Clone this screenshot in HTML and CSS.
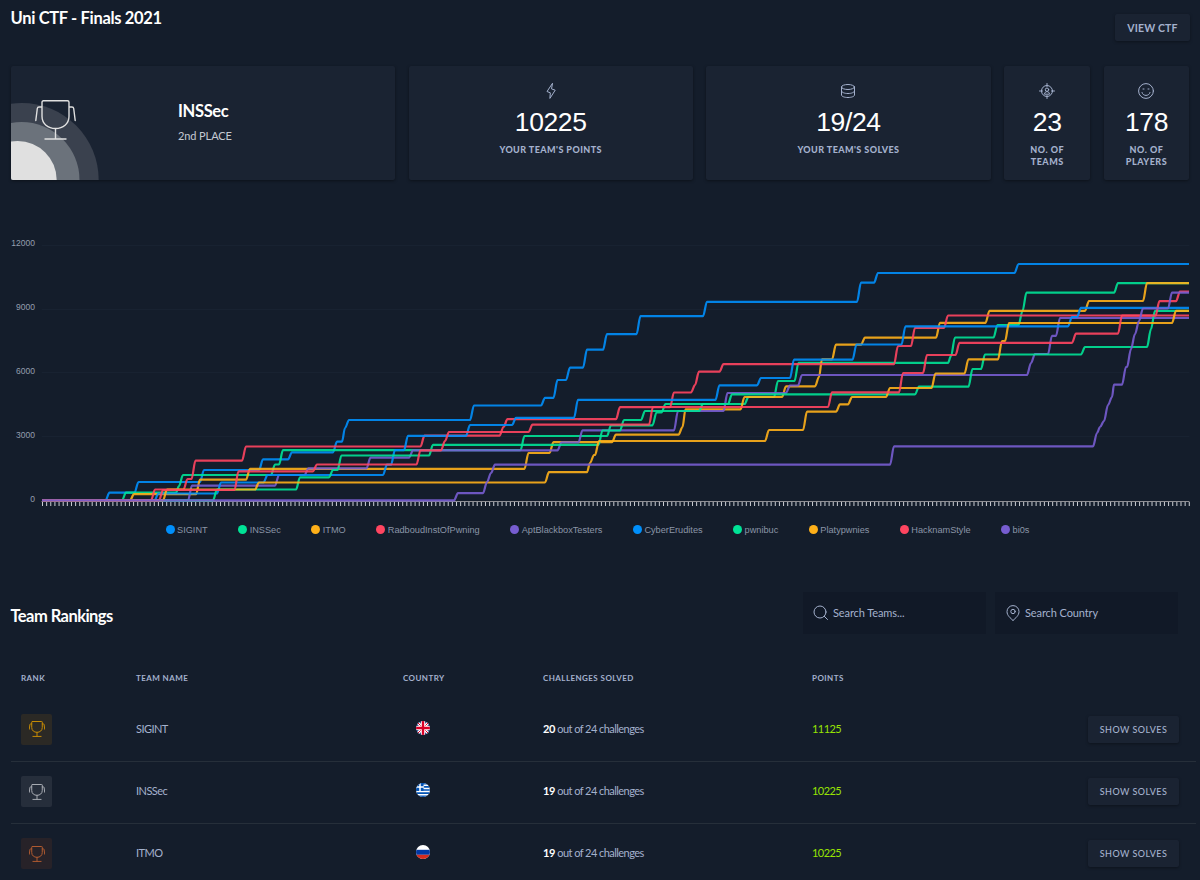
FILE: index.html
```html
<!DOCTYPE html>
<html lang="en">
<head>
    <meta charset="UTF-8">
    <meta name="viewport" content="width=device-width, initial-scale=1.0">
    <title>Uni CTF - Finals 2021</title>
    <link rel="stylesheet" href="styles.css">
</head>
<body>
    <!-- Shared icons -->
    <svg class="sprite" width="0" height="0">
        <symbol id="trophy" viewBox="0 0 41 40">
            <path d="M8.5 .8h24q1.5 0 1.5 1.5v14c0 7.5-6 12.2-13.5 12.2S7 23.800 7 16.300v-14Q7 .8 8.500 .8zM20.500 28.500V39M10 39h21M7 7H4Q2.500 7 2.300 8.500L.8 20.500M34 7h3q1.500 0 1.700 1.500l1.500 12"/>
        </symbol>
    </svg>

    <header class="page-header">
        <h1>Uni CTF - Finals 2021</h1>
        <button class="btn view-btn">VIEW CTF</button>
    </header>

    <!-- Stats -->
    <section class="stats">
        <div class="card place-card">
            <svg class="place-art" width="100" height="114" viewBox="0 0 100 114">
                <circle cx="10.700" cy="114" r="77" fill="#3a414e"/>
                <circle cx="10.500" cy="114" r="58" fill="#6b727b"/>
                <circle cx="6.700" cy="114" r="39" fill="#e0e0e0"/>
            </svg>
            <svg class="place-trophy"><use href="#trophy"/></svg>
            <div class="place-text">
                <h2>INSSec</h2>
                <p>2nd PLACE</p>
            </div>
        </div>
        <div class="card stat">
            <svg viewBox="0 0 16 16"><path d="M9.300 .6 4 8.500l3.300 1.300L6.900 15.400 12.200 7.200 8.900 6z"/></svg>
            <strong>10225</strong>
            <span>YOUR TEAM'S POINTS</span>
        </div>
        <div class="card stat">
            <svg viewBox="0 0 16 16"><ellipse cx="8" cy="4" rx="6.500" ry="2.500"/><path d="M1.500 4v8c0 1.400 2.900 2.500 6.500 2.500s6.500-1.100 6.500-2.500V4M1.500 8c0 1.400 2.900 2.500 6.500 2.500s6.500-1.100 6.500-2.500"/></svg>
            <strong>19/24</strong>
            <span>YOUR TEAM'S SOLVES</span>
        </div>
        <div class="card stat">
            <svg viewBox="0 0 16 16"><circle cx="8" cy="8" r="5.500"/><path d="M8 .5v3M8 12.500v3M.5 8h3M12.500 8h3M5.500 10.800c0-3 5-3 5 0z"/><circle cx="8" cy="6.700" r="1.700"/></svg>
            <strong>23</strong>
            <span>NO. OF TEAMS</span>
        </div>
        <div class="card stat">
            <svg viewBox="0 0 16 16"><circle cx="8" cy="8" r="7.400"/><path d="M4 9.500c.8 4 7.200 4 8 0M5 6h1M10 6h1"/></svg>
            <strong>178</strong>
            <span>NO. OF PLAYERS</span>
        </div>
    </section>

    <!-- Score chart -->
    <section class="chart">
        <svg id="chart" width="1200" height="282" viewBox="0 230 1200 282">
            <g class="grid-lines">
                <path d="M42 245.500H1189M42 309.500H1189M42 372.500H1189M42 436.500H1189"/>
            </g>
            <g class="y-labels">
                <text x="35" y="246">12000</text>
                <text x="35" y="310">9000</text>
                <text x="35" y="374">6000</text>
                <text x="35" y="438">3000</text>
                <text x="35" y="502">0</text>
            </g>
            <path class="axis-line" d="M42 501.500H1189"/>
            <path class="axis-ticks" d="M42 504H1190"/>
            <g id="series"></g>
        </svg>
        <ul class="legend" id="legend"></ul>
    </section>

    <!-- Rankings -->
    <section class="rankings">
        <div class="rankings-header">
            <h2>Team Rankings</h2>
            <div class="search">
                <svg viewBox="0 0 16 16"><circle cx="7" cy="7" r="6"/><path d="m11.300 11.300 3.200 3.200"/></svg>
                <span>Search Teams...</span>
            </div>
            <div class="search">
                <svg viewBox="0 0 16 16"><path d="M8 15.400C5.500 13.200 2 10.500 2 6.600a6 6 0 0 1 12 0c0 3.900-3.500 6.600-6 8.800z"/><circle cx="8" cy="6.500" r="2.200"/></svg>
                <span>Search Country</span>
            </div>
        </div>

        <div class="row head">
            <span>RANK</span><span>TEAM NAME</span><span>COUNTRY</span><span>CHALLENGES SOLVED</span><span>POINTS</span>
        </div>
        <div class="row">
            <div class="rank gold"><svg><use href="#trophy"/></svg></div>
            <span>SIGINT</span>
            <svg class="flag" viewBox="0 0 14 14">
                <rect width="14" height="14" fill="#0f2c75"/>
                <path d="M0 0l14 14M14 0 0 14" stroke="#fff" stroke-width="3"/>
                <path d="M0 0l14 14M14 0 0 14" stroke="#d80027" stroke-width="1"/>
                <path d="M7 0v14M0 7h14" stroke="#fff" stroke-width="4.400"/>
                <path d="M7 0v14M0 7h14" stroke="#d80027" stroke-width="2.400"/>
            </svg>
            <span><b>20</b> out of 24 challenges</span>
            <span class="points">11125</span>
            <button class="btn">SHOW SOLVES</button>
        </div>
        <div class="row">
            <div class="rank silver"><svg><use href="#trophy"/></svg></div>
            <span>INSSec</span>
            <svg class="flag" viewBox="0 0 14 14">
                <rect width="14" height="14" fill="#fff"/>
                <path d="M0 .8h14M0 3.900h14M0 7h14M0 10.100h14M0 13.200h14" stroke="#0052b4" stroke-width="1.600"/>
                <rect width="7.500" height="7.800" fill="#0052b4"/>
                <path d="M4 0v7.800M0 3.900h7.500" stroke="#fff" stroke-width="1.500"/>
            </svg>
            <span><b>19</b> out of 24 challenges</span>
            <span class="points">10225</span>
            <button class="btn">SHOW SOLVES</button>
        </div>
        <div class="row">
            <div class="rank bronze"><svg><use href="#trophy"/></svg></div>
            <span>ITMO</span>
            <svg class="flag" viewBox="0 0 14 14">
                <rect width="14" height="14" fill="#fff"/>
                <rect y="4.800" width="14" height="5" fill="#0039a6"/>
                <rect y="9.800" width="14" height="4.200" fill="#d52b1e"/>
            </svg>
            <span><b>19</b> out of 24 challenges</span>
            <span class="points">10225</span>
            <button class="btn">SHOW SOLVES</button>
        </div>
    </section>

<script>
    const BASE = 500.3;
    const END_X = 1189;

    // Each step is [x where the climb starts, y after it, width of the climb]
    const teams = [
        { name: "SIGINT", color: "#008ffb", steps: [[105.500,492.700],[134.500,482],[200,470],[259,459.300],[288,452.300],[333,441.700],[342,428,3],[345,420],[470,405.500],[541,397.800],[553.500,380],[566,367.700],[583,349.700],[603,334.200],[636.500,316.200],[703,301.800],[857,282.700],[874,273],[1014.500,264]] },
        { name: "INSSec", color: "#00e396", steps: [[122,492.700],[176,486,3],[179,475],[271,464.500],[279,450.200],[520.500,436],[607,425.300],[652.500,412.500],[661.500,404],[744.500,397],[774,381],[794.500,362.800],[948,356,3],[951,337.500],[993.500,325],[1018.500,311,4],[1022.500,292.700],[1114,283.200]] },
        { name: "ITMO", color: "#feb019", steps: [[130,494.200],[196,479.700],[246,468.800],[524.500,453],[549.500,442.200],[612,434.700],[678.500,427],[682.500,409.300,3],[740.500,397],[782,386.300],[815,377],[819,359.300,3],[832,344.700],[861,337.600],[936,322.800],[985.500,310.800],[1085,301],[1143,283.200]] },
        { name: "RadboudInstOfPwning", color: "#ff4560", steps: [[151,489.500],[183.500,479],[191.500,460.700],[242,446.500],[420.500,435.700],[499.500,427],[503.500,419.200],[616,407.200],[670,392.500],[691,385],[695,371.600],[719.500,364.200],[894,346],[911,327.800],[944,315.500]] },
        { name: "AptBlackboxTesters", color: "#775dd0", steps: [[188,485.700],[275,475],[304.500,468.300],[366.500,457.700],[409,450.300],[557.500,442.300],[578.500,430.300],[674,411],[723.500,393],[786,385.500],[798,375],[1027,363],[1031,354],[1048,335.800],[1056,318]] },
        { name: "CyberErudites", color: "#008ffb", steps: [[154.500,493.500],[217,482.500],[263.500,475],[383,464.700],[391,450.200],[404,435.800],[466,425],[512,417.800],[574,399.800],[715.500,385.300],[757,378],[790,359.700],[852.500,344.500],[901.500,326.300],[1068,317],[1077,307.800]] },
        { name: "pwnibuc", color: "#00e396", steps: [[213,489.500],[296,477.300],[329,470],[337.500,455.500],[429,444.800],[598.500,430.500],[620,420],[641,411],[699,404],[728,394.300],[915,386.700],[968.500,369],[981,354.500],[1081,347],[1147,329],[1151,310.800]] },
        { name: "Platypwnies", color: "#feb019", steps: [[163,489.500],[255,482.500],[545,472.200],[587,463,3],[590,455],[595,441],[765,430],[803,411.700],[836,404.400],[848,397],[886,388],[931.500,373.500],[964.500,359.300],[998,341],[1005,323],[1172,310.800]] },
        { name: "HacknamStyle", color: "#ff4560", steps: [[159,490],[234.500,471.300],[313,464.500],[416.500,450.300],[441,441],[445,432],[528.500,424.700],[649,407],[828,392.300],[899,373],[923,355],[955.500,342.800],[1072,333.700],[1118,315.700],[1155.500,301.200],[1176,291.600]] },
        { name: "bi0s", color: "#775dd0", steps: [[454,493.200],[483,482],[487,473],[491,464.700],[890,446.400],[1093,433],[1097,427,3],[1100,421],[1104,405],[1108,397],[1112,384.700,2],[1122,367],[1127,349],[1131,334],[1135,321],[1139,308.500],[1168,292.600]] }
    ];

    // Smooth line: flat run, then a short curve up to the next score
    function buildPath(steps) {
        let y = BASE;
        let d = `M42 ${y}`;
        steps.forEach(([x, nextY, width = 4]) => {
            const bend = width * 0.35;
            d += `L${x} ${y}C${x + bend} ${y} ${x + width - bend} ${nextY} ${x + width} ${nextY}`;
            y = nextY;
        });
        return d + `H${END_X}`;
    }

    const series = document.getElementById("series");
    const legend = document.getElementById("legend");

    teams.forEach(team => {
        const path = document.createElementNS("http://www.w3.org/2000/svg", "path");
        path.setAttribute("d", buildPath(team.steps));
        path.setAttribute("stroke", team.color);
        series.appendChild(path);

        const li = document.createElement("li");
        li.innerHTML = `<i style="background: ${team.color}"></i>${team.name}`;
        legend.appendChild(li);
    });
</script>

</body>
</html>
```
FILE: styles.css
```css
* {
    margin: 0;
    padding: 0;
    box-sizing: border-box;
}

body {
    width: 1200px;
    height: 880px;
    overflow: hidden;
    background: #141d2b;
    color: #a4b1cd;
    font-family: 'Lato', sans-serif;
    font-size: 11px;
}

.sprite { position: absolute; }

svg {
    fill: none;
    stroke: currentColor;
    stroke-width: 1;
    stroke-linecap: round;
    stroke-linejoin: round;
}

symbol path { vector-effect: non-scaling-stroke; }

h1, h2 {
    color: #fff;
    font-size: 16.5px;
    font-weight: 700;
    letter-spacing: -0.33px;
    line-height: 20px;
}

.page-header {
    display: flex;
    justify-content: space-between;
    height: 66px;
    padding: 8px 10px 0 10.5px;
}

.btn {
    height: 27px;
    border: none;
    border-radius: 2px;
    background: #1a2332;
    box-shadow: 0 1px 3px rgba(0, 0, 0, 0.35);
    color: #a4b1cd;
    font-family: inherit;
    font-size: 9px;
    font-weight: 500;
    letter-spacing: 0.45px;
}

.view-btn {
    width: 75px;
    margin-top: 6px;
    font-size: 10.5px;
    font-weight: 700;
    letter-spacing: 0.15px;
}

.stats {
    display: grid;
    grid-template-columns: 385fr 284fr 285fr 86fr 86fr;
    gap: 13.3px;
    height: 113.5px;
    margin-bottom: 0.5px;
    padding: 0 10.5px;
}

.card {
    border-radius: 2px;
    background: #1a2332;
    box-shadow: 0 1px 3px rgba(0, 0, 0, 0.4);
}

.place-card {
    position: relative;
    overflow: hidden;
    padding: 35px 0 0 167.5px;
}

.place-art {
    position: absolute;
    left: 0;
    bottom: 0;
    stroke: none;
}

.place-trophy {
    position: absolute;
    left: 24px;
    top: 34px;
    width: 41px;
    height: 40px;
    color: #e0e0e0;
    stroke-width: 1.4;
    overflow: visible;
}

.place-text p {
    margin-top: 8px;
    color: #c5cad3;
    font-size: 11px;
    letter-spacing: -0.1px;
    line-height: 14px;
}

.stat {
    display: flex;
    flex-direction: column;
    align-items: center;
    padding-top: 17px;
    text-align: center;
}

.stat svg {
    width: 16px;
    height: 16px;
}

.stat strong {
    margin-top: 8px;
    color: #fff;
    font: 400 26.5px/30px 'Liberation Sans', Arial, sans-serif;
    letter-spacing: -0.4px;
}

.stat span {
    max-width: 120px;
    margin-top: 7px;
    font-size: 9px;
    font-weight: 900;
    letter-spacing: 0.43px;
    line-height: 12px;
}

.stat:nth-child(n+4) span {
    max-width: 50px;
    letter-spacing: 0.5px;
}

.chart {
    height: 362px;
    padding-top: 50px;
}

.chart > svg { display: block; }

.grid-lines { stroke: #182231; }

.y-labels text {
    fill: #949dae;
    stroke: none;
    font: 8.5px 'Liberation Sans', Arial, sans-serif;
    text-anchor: end;
}

.axis-line { stroke: #8f8f94; }

.axis-ticks {
    stroke: #c9cdd3;
    stroke-width: 4;
    stroke-dasharray: 1 3.14;
    stroke-linecap: butt;
}

#series {
    stroke-width: 2.2;
    stroke-linecap: butt;
}

#series path { opacity: 0.9; }

.legend {
    display: flex;
    gap: 30.5px;
    padding-left: 165.5px;
    list-style: none;
    font: 9.2px/36px 'Liberation Sans', Arial, sans-serif;
    color: #8b95a7;
    white-space: nowrap;
}

.legend li {
    display: flex;
    align-items: center;
}

.legend i {
    width: 9px;
    height: 9px;
    margin: 0 2.5px 1px 0;
    border-radius: 50%;
}

.rankings { padding-top: 50px; }

.rankings-header {
    display: flex;
    align-items: center;
    gap: 9px;
    height: 42px;
    padding: 0 22px 0 10.5px;
}

.rankings-header h2 {
    margin: 6px auto 0 0;
    letter-spacing: -0.55px;
}

.search {
    display: flex;
    align-items: center;
    gap: 4px;
    width: 183px;
    height: 42px;
    padding-left: 10px;
    background: #111927;
}

.search svg {
    width: 16px;
    height: 16px;
}

.search span {
    margin-bottom: 1px;
    letter-spacing: -0.1px;
}

.row {
    display: grid;
    grid-template-columns: 115px 267px 140px 269px 276px 91px;
    align-items: center;
    height: 62px;
    margin: 0 4px 0 11px;
    padding: 0 0 2px 10px;
}

.row + .row + .row { border-top: 1px solid #262f3a; }

.row span {
    margin-bottom: 2px;
    font-size: 11px;
    letter-spacing: -0.55px;
}

.row.head {
    height: 65px;
    padding-top: 26px;
}

.row.head span {
    margin-bottom: 1px;
    font-size: 8px;
    font-weight: 700;
    letter-spacing: 0.43px;
}

.rank {
    display: flex;
    align-items: center;
    justify-content: center;
    width: 31px;
    height: 31px;
    border-radius: 2px;
}

.rank svg {
    width: 16px;
    height: 16px;
    overflow: visible;
}

.gold { background: #2b2925; color: #c58b05; }
.silver { background: #262e3b; color: #a8acb3; }
.bronze { background: #272228; color: #b05a30; }

.flag {
    width: 14px;
    height: 14px;
    margin: 0 0 3px 12.5px;
    border-radius: 50%;
    stroke: none;
}

.row b {
    color: #fff;
    letter-spacing: -0.4px;
}

.points { color: #97e303; }
```
